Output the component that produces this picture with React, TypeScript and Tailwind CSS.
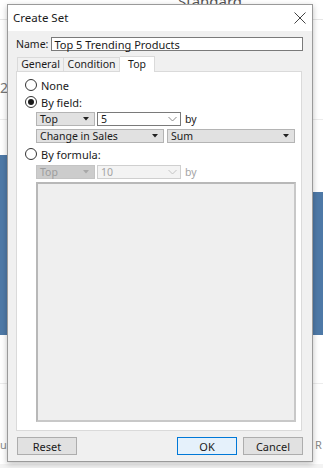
import React from "react";

const font = { fontFamily: '"Noto Sans", "Segoe UI", Arial, sans-serif' };

function Radio({ checked = false, label }: { checked?: boolean; label: string }) {
  return (
    <div className="flex items-center h-[12px] text-[11px] text-[#1a1a1a]">
      <div className="w-[12px] h-[12px] rounded-full border border-[#333] bg-white flex items-center justify-center">
        {checked && <div className="w-[6px] h-[6px] rounded-full bg-[#1a1a1a]" />}
      </div>
      <span className="ml-[4px] leading-none">{label}</span>
    </div>
  );
}

function Caret({ disabled = false }: { disabled?: boolean }) {
  return (
    <svg width="6" height="4" viewBox="0 0 6 4" className="mr-[5px]">
      <path d="M0 0h6L3 3.5z" fill={disabled ? "#a8a8a8" : "#222"} />
    </svg>
  );
}

function Chevron({ disabled = false }: { disabled?: boolean }) {
  return (
    <svg width="9" height="6" viewBox="0 0 9 6" className="mr-[3px]">
      <path d="M0.5 1l4 4 4-4" fill="none" stroke={disabled ? "#c4c4c4" : "#8a8a8a"} strokeWidth="1" />
    </svg>
  );
}

function DropDown({ value, width, disabled = false }: { value: string; width: string; disabled?: boolean }) {
  return (
    <div
      className={
        "h-[14px] flex items-center justify-between border text-[10.5px] leading-none " +
        width +
        (disabled ? " bg-[#cccccc] border-[#c4c4c4] text-[#9c9c9c]" : " bg-[#e1e1e1] border-[#b4b4b4] text-[#1a1a1a]")
      }
    >
      <span className="pl-[3px]">{value}</span>
      <Caret disabled={disabled} />
    </div>
  );
}

function Combo({ value, disabled = false }: { value: string; disabled?: boolean }) {
  return (
    <div
      className={
        "h-[14px] w-[84px] flex items-center justify-between border text-[10.5px] leading-none " +
        (disabled ? "bg-[#f3f3f3] border-[#cfcfcf] text-[#a4a4a4]" : "bg-white border-[#7a7a7a] text-[#1a1a1a]")
      }
    >
      <span className="pl-[3px]">{value}</span>
      <Chevron disabled={disabled} />
    </div>
  );
}

function Button({ label, primary = false }: { label: string; primary?: boolean }) {
  return (
    <div
      className={
        "w-[60px] h-[18px] flex items-center justify-center border text-[11px] leading-none text-[#1a1a1a] " +
        (primary ? "bg-[#e5f1fb] border-[#0078d7]" : "bg-[#e1e1e1] border-[#adadad]")
      }
    >
      {label}
    </div>
  );
}

export default function App() {
  return (
    <div className="relative w-[323px] h-[468px] bg-white overflow-hidden" style={font}>
      {/* worksheet behind the dialog */}
      <div className="absolute left-0 right-0 top-[19px] h-px bg-[#e6e6e6]" />
      <div className="absolute left-0 right-0 top-[119px] h-px bg-[#ececec]" />
      <div className="absolute left-0 right-0 top-[383px] h-px bg-[#ececec]" />
      <div className="absolute left-0 right-0 top-[464px] h-[4px] bg-[#f3f3f3]" />
      <div className="absolute left-[178px] top-[-8px] text-[15px] leading-[18px] text-[#555]">Standard</div>
      <div className="absolute left-0 top-[80px] text-[14px] leading-[16px] text-[#777]">2</div>
      <div className="absolute left-0 top-[155px] w-[8px] h-[180px] bg-[#4e79a7]" />
      <div className="absolute left-[313px] top-[192px] w-[10px] h-[143px] bg-[#4e79a7]" />
      <div className="absolute left-0 top-[437px] text-[11px] text-[#888]">u</div>
      <div className="absolute left-[315px] top-[437px] text-[11px] text-[#888]">R</div>

      {/* dialog */}
      <div className="absolute left-[7px] top-[4px] w-[306px] h-[458px] border border-[#9a9a9a] bg-[#f0f0f0] flex flex-col shadow-[0_2px_6px_rgba(0,0,0,0.25)]">
        <div className="h-[26px] bg-white flex items-center justify-between pl-[5px] pr-[6px]">
          <span className="text-[11.5px] text-[#1a1a1a]">Create Set</span>
          <svg width="12" height="12" viewBox="0 0 12 12">
            <path d="M0.5 0.5l11 11M11.5 0.5l-11 11" stroke="#444" strokeWidth="1" />
          </svg>
        </div>

        <div className="flex flex-col pl-[8px] pr-[9px] pt-[6px] flex-1">
          <div className="flex items-center h-[14px] gap-[3px]">
            <span className="text-[10.5px] text-[#1a1a1a] leading-none">Name:</span>
            <div className="flex-1 h-[14px] bg-white border border-[#7a7a7a] flex items-center text-[11px] text-[#1a1a1a] leading-none pl-[2px]">
              Top 5 Trending Products
            </div>
          </div>

          <div className="flex items-end h-[16px] mt-[4px] pl-[1px]">
            <div className="w-[47px] h-[14px] border border-b-0 border-[#dadada] bg-[#f0f0f0] flex items-center justify-center text-[10.5px] text-[#1a1a1a] leading-none">
              General
            </div>
            <div className="w-[56px] h-[14px] border border-b-0 border-l-0 border-[#dadada] bg-[#f0f0f0] flex items-center justify-center text-[10.5px] text-[#1a1a1a] leading-none">
              Condition
            </div>
            <div className="w-[35px] h-[16px] border border-b-0 border-l-0 border-[#dadada] bg-white flex items-center justify-center text-[10.5px] text-[#1a1a1a] leading-none mb-[-1px] relative">
              Top
            </div>
          </div>

          <div className="h-[360px] border border-[#dadada] bg-white flex flex-col pl-[8px] pt-[7px] mr-[1px]">
            <Radio label="None" />
            <div className="mt-[5px]">
              <Radio checked label="By field:" />
            </div>
            <div className="flex items-center mt-[4px] ml-[11px]">
              <DropDown value="Top" width="w-[59px]" />
              <div className="ml-[2px]">
                <Combo value="5" />
              </div>
              <span className="ml-[4px] text-[10.5px] text-[#1a1a1a] leading-none">by</span>
            </div>
            <div className="flex items-center mt-[3px] ml-[11px]">
              <DropDown value="Change in Sales" width="w-[128px]" />
              <div className="ml-[3px]">
                <DropDown value="Sum" width="w-[128px]" />
              </div>
            </div>
            <div className="mt-[5px]">
              <Radio label="By formula:" />
            </div>
            <div className="flex items-center mt-[5px] ml-[11px]">
              <DropDown value="Top" width="w-[59px]" disabled />
              <div className="ml-[2px]">
                <Combo value="10" disabled />
              </div>
              <span className="ml-[4px] text-[10.5px] text-[#a4a4a4] leading-none">by</span>
            </div>
            <div className="mt-[3px] ml-[11px] w-[260px] h-[240px] bg-[#efefef] border-2 border-[#b8b8b8] border-r-[#c8c8c8] border-b-[#c8c8c8]" />
          </div>

          <div className="flex items-center justify-between mt-[6px] pl-[1px]">
            <Button label="Reset" />
            <div className="flex items-center gap-[6px]">
              <Button label="OK" primary />
              <Button label="Cancel" />
            </div>
          </div>
        </div>
      </div>
    </div>
  );
}
